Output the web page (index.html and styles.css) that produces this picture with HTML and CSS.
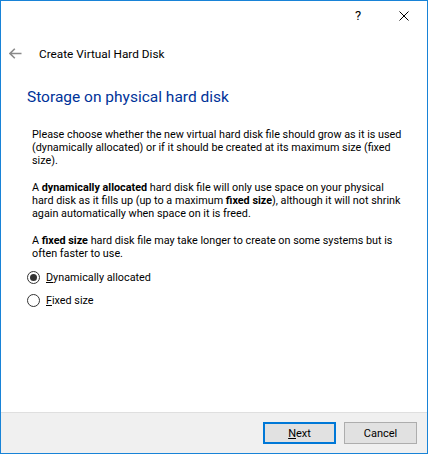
FILE: index.html
```html
<!DOCTYPE html>
<html>
<head>
<meta charset="utf-8">
<title>Create Virtual Hard Disk</title>
<link rel="stylesheet" href="styles.css">
</head>
<body>
<div class="window">
  <div class="titlebar">
    <div class="cap-btn help">?</div>
    <div class="cap-btn close">
      <svg width="10" height="10" viewBox="0 0 10 10"><path d="M0.5 0.5 L9.5 9.5 M9.5 0.5 L0.5 9.5" stroke="#000" stroke-width="1" fill="none"/></svg>
    </div>
  </div>
  <div class="header">
    <svg class="back" width="13" height="11" viewBox="0 0 13 11"><path d="M1 5.5 H12.5 M5.8 0.8 L1 5.5 L5.8 10.2" stroke="#8a8a8a" stroke-width="1.6" fill="none"/></svg>
    <span class="wiz-title">Create Virtual Hard Disk</span>
  </div>
  <h1 class="heading">Storage on physical hard disk</h1>
  <div class="content">
    <p class="para">Please choose whether the new virtual hard disk file should grow as it is used<br>(dynamically allocated) or if it should be created at its maximum size (fixed<br>size).</p>
    <p class="para">A <b>dynamically allocated</b> hard disk file will only use space on your physical<br>hard disk as it fills up (up to a maximum <b>fixed size</b>), although it will not shrink<br>again automatically when space on it is freed.</p>
    <p class="para">A <b>fixed size</b> hard disk file may take longer to create on some systems but is<br>often faster to use.</p>
    <div class="radios">
      <div class="radio-row"><span class="radio checked"></span><span class="radio-label"><u>D</u>ynamically allocated</span></div>
      <div class="radio-row"><span class="radio"></span><span class="radio-label"><u>F</u>ixed size</span></div>
    </div>
  </div>
  <div class="footer">
    <div class="btn default"><u>N</u>ext</div>
    <div class="btn">Cancel</div>
  </div>
</div>
</body>
</html>
```
FILE: styles.css
```css
html, body {
  margin: 0;
  padding: 0;
  background: #ffffff;
}
.window {
  width: 428px;
  height: 454px;
  box-sizing: border-box;
  border: 1px solid #1883d7;
  background: #ffffff;
  display: flex;
  flex-direction: column;
  font-family: Roboto, "Noto Sans", sans-serif;
  color: #000000;
}
.titlebar {
  height: 29px;
  display: flex;
  justify-content: flex-end;
  flex-shrink: 0;
}
.cap-btn {
  width: 46px;
  height: 29px;
  display: flex;
  align-items: center;
  justify-content: center;
}
.help {
  font-size: 13px;
  line-height: 29px;
}
.header {
  margin-top: 14px;
  height: 18px;
  display: flex;
  align-items: center;
  padding-left: 8px;
  flex-shrink: 0;
}
.back {
  display: block;
}
.wiz-title {
  margin-left: 17px;
  font-size: 11.8px;
  line-height: 18px;
  padding-top: 2px;
}
.heading {
  margin: 25px 0 0 26px;
  font-size: 15.5px;
  line-height: 21px;
  font-weight: normal;
  color: #003399;
}
.content {
  margin-top: 20px;
  padding-left: 31px;
  font-size: 10.8px;
  line-height: 13.2px;
}
.para {
  margin: 0 0 13.2px 0;
  white-space: nowrap;
}
.para b {
  font-weight: bold;
}
.radios {
  margin-top: -7px;
  display: flex;
  flex-direction: column;
}
.radio-row {
  height: 23px;
  display: flex;
  align-items: center;
  margin-left: -5px;
}
.radio {
  width: 13px;
  height: 13px;
  box-sizing: border-box;
  border: 1px solid #333333;
  border-radius: 50%;
  background: #ffffff;
  display: flex;
  align-items: center;
  justify-content: center;
}
.radio.checked::after {
  content: "";
  width: 7px;
  height: 7px;
  border-radius: 50%;
  background: #333333;
}
.radio-label {
  margin-left: 6px;
  font-size: 10.8px;
}
.footer {
  margin-top: auto;
  height: 41px;
  box-sizing: border-box;
  border-top: 1px solid #dfdfdf;
  background: #f0f0f0;
  display: flex;
  justify-content: flex-end;
  align-items: flex-start;
  padding: 9px 10px 0 0;
  gap: 8px;
  flex-shrink: 0;
}
.btn {
  width: 73px;
  height: 22px;
  box-sizing: border-box;
  border: 1px solid #adadad;
  background: #e1e1e1;
  font-size: 11px;
  display: flex;
  align-items: center;
  justify-content: center;
}
.btn.default {
  border: 2px solid #0078d7;
}
```
